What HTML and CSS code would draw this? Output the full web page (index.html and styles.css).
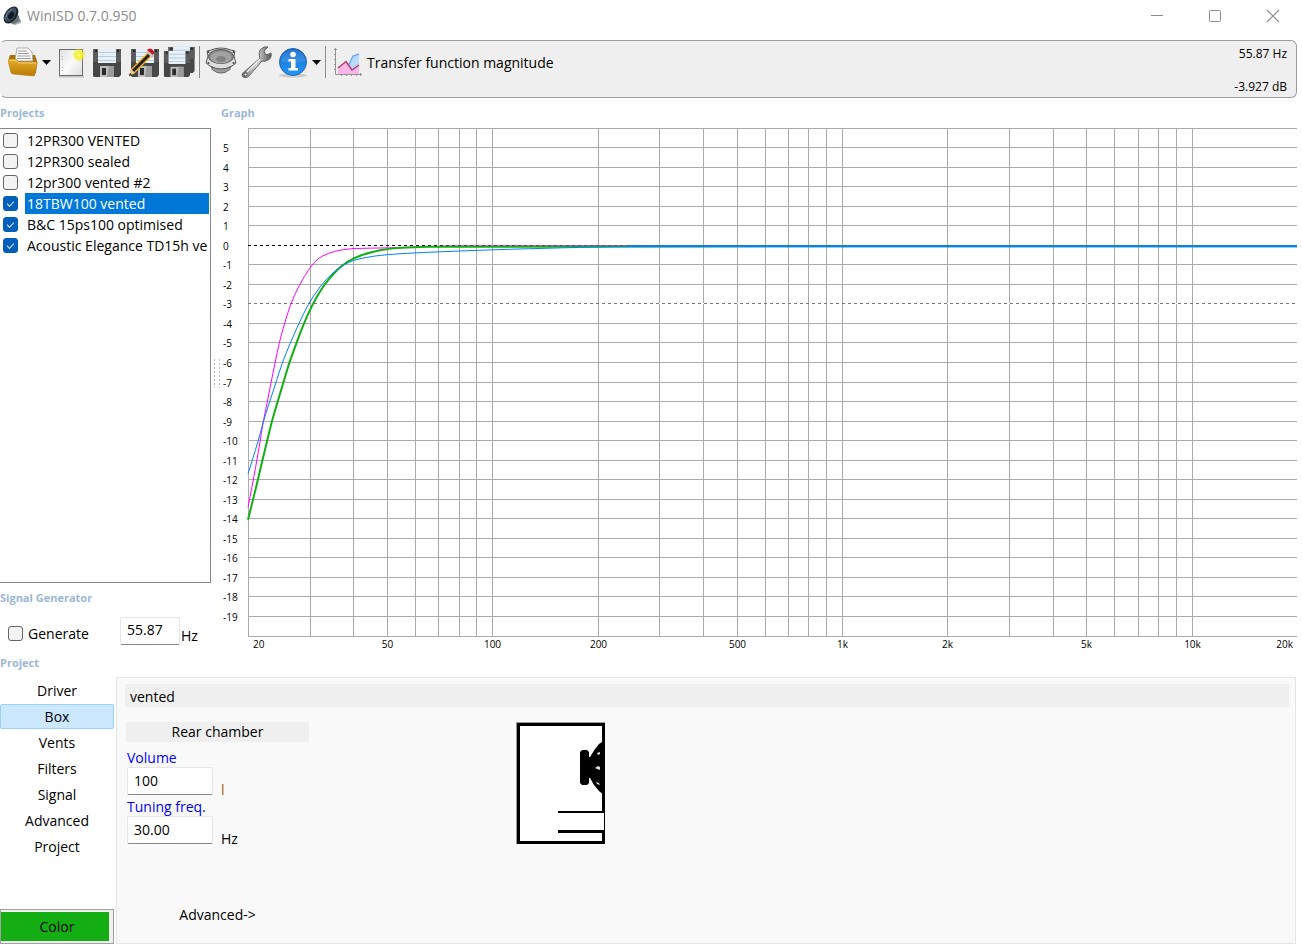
FILE: index.html
```html
<!DOCTYPE html>
<html lang="en">
<head>
    <meta charset="UTF-8">
    <meta name="viewport" content="width=device-width, initial-scale=1.0">
    <title>WinISD 0.7.0.950</title>
    <link rel="stylesheet" href="styles.css">
</head>
<body>
    <header class="titlebar">
        <svg class="app-icon" width="20" height="20" viewBox="0 0 20 20">
            <path d="M9 18 L13 15 L19 14 L19 17 L13 19 Z" fill="#a9b0b3"/>
            <path d="M13 7 L17 10 L18 15 L12 18 L8 17 Z" fill="#6b7679"/>
            <ellipse cx="9" cy="9" rx="6" ry="9.5" transform="rotate(36 9 9)" fill="#1b242b"/>
            <ellipse cx="8.5" cy="8.5" rx="4.5" ry="8" transform="rotate(36 8.5 8.5)" fill="#3c4f62"/>
            <ellipse cx="9" cy="9.5" rx="2.4" ry="4" transform="rotate(36 9 9.5)" fill="#141a20"/>
            <path d="M3 13 Q4 7 10 3" stroke="#6c8298" fill="none"/>
        </svg>
        <h1>WinISD 0.7.0.950</h1>
        <div class="window-buttons">
            <button aria-label="Minimize"><svg width="14" height="14"><path d="M1 6.5h12" stroke="#8b8b8b"/></svg></button>
            <button aria-label="Maximize"><svg width="14" height="14"><rect x="1.5" y="1.5" width="11" height="11" rx="1" fill="none" stroke="#8b8b8b"/></svg></button>
            <button aria-label="Close"><svg width="14" height="14"><path d="M1 1l12 12M13 1L1 13" stroke="#8b8b8b" stroke-width="1.2"/></svg></button>
        </div>
    </header>

    <svg width="0" height="0" class="defs">
        <defs>
            <linearGradient id="gold" x2="0" y2="1"><stop stop-color="#e7b02a"/><stop offset="1" stop-color="#b97905"/></linearGradient>
            <linearGradient id="paper" x2="1" y2="1"><stop stop-color="#dedede"/><stop offset=".5" stop-color="#fbfbfb"/><stop offset="1" stop-color="#dcdcdc"/></linearGradient>
            <linearGradient id="steel" x2="1" y2="0"><stop stop-color="#666"/><stop offset=".5" stop-color="#d8d8d8"/><stop offset="1" stop-color="#555"/></linearGradient>
            <linearGradient id="blue" x2="0" y2="1"><stop stop-color="#0b62c8"/><stop offset=".45" stop-color="#1a7fe0"/><stop offset="1" stop-color="#2499f5"/></linearGradient>
            <radialGradient id="glow"><stop stop-color="#ffffa0"/><stop offset=".45" stop-color="#f4ef20"/><stop offset="1" stop-color="#f4ef20" stop-opacity="0"/></radialGradient>
            <symbol id="floppy" viewBox="0 0 28 30">
                <path d="M0 1h28v26l-2 2H1l-1-1z" fill="#474747"/>
                <path d="M0 1h28v13H0z" fill="#5b5b5b"/>
                <path d="M5 1h18v14H5z" fill="#e9f1f8"/>
                <path d="M5 4.5h18M5 8.5h18M5 12.5h18" stroke="#b4cbe0"/>
                <path d="M7 18h14v11H7z" fill="#bdbdbd"/>
                <path d="M16 18h5v11h-7z" fill="#9a9a9a"/>
                <rect x="9" y="20" width="4" height="7" fill="#292929"/>
                <rect x="2" y="2" width="2" height="2" fill="#222"/><rect x="24" y="2" width="2" height="2" fill="#222"/>
            </symbol>
        </defs>
    </svg>

    <div class="toolbar">
        <button class="tool" aria-label="Open project">
            <svg width="30" height="32" viewBox="0 0 30 32">
                <path d="M1 12 L2 9 L27 9 L29 15 L28 27 L3 27z" fill="#a96e08"/>
                <path d="M7 14 L9 2 L20 2 L24 6 L25 15 L7 15z" fill="#fff" stroke="#aaa"/>
                <path d="M10 5h9M10 7.5h11M9.5 10h13M9 12.5h14" stroke="#999"/>
                <path d="M0 15 Q0 13 2 13 L8 13 L11 16 L28 16 Q30 16 29 18 L27 28 Q27 30 25 30 L5 28 Q3 28 3 26z" fill="url(#gold)" stroke="#b88316" stroke-width=".6"/>
                <path d="M1.5 14.5 L8 14.5 L11 17 L28 17" stroke="#f3d371" fill="none"/>
            </svg>
        </button>
        <button class="arrow" aria-label="Recent projects"><svg width="9" height="5"><path d="M0 0h9L4.5 5z"/></svg></button>
        <button class="tool" aria-label="New project">
            <svg width="28" height="32" viewBox="0 0 28 32">
                <path d="M1 30.5h25" stroke="#999" stroke-width="2" opacity=".5"/>
                <rect x="1.5" y="3.5" width="23" height="26" fill="url(#paper)" stroke="#6d6d6d"/>
                <path d="M4.5 10v4M4.5 21v4" stroke="#aaa" stroke-dasharray="1 2"/>
                <circle cx="21" cy="9" r="7" fill="url(#glow)"/>
            </svg>
        </button>
        <button class="tool" aria-label="Save project">
            <svg width="30" height="32"><use href="#floppy" x="0" y="2" width="28" height="30"/></svg>
        </button>
        <button class="tool" aria-label="Save project as">
            <svg width="32" height="32">
                <use href="#floppy" x="3" y="2" width="28" height="30"/>
                <path d="M1 30 L3 23 L21 5 L25 9 L7 27z" fill="#f0b01b"/>
                <path d="M5 25 L23 7" stroke="#242018" stroke-width="3"/>
                <path d="M1 30 L3 23 L7 27z" fill="#e6c593"/><path d="M1 30 L2 27 L4 29z" fill="#222"/>
                <path d="M18 6 L20 4 L26 10 L24 12z" fill="#c3c3c3"/>
                <path d="M19 4 Q22 1 25 4 Q27 7 25 9z" fill="#c91423"/>
            </svg>
        </button>
        <button class="tool" aria-label="Save all projects">
            <svg width="34" height="34">
                <use href="#floppy" x="5" y="1" width="27" height="28"/>
                <use href="#floppy" x="0" y="5" width="28" height="28"/>
            </svg>
        </button>
        <span class="separator"></span>
        <button class="tool" aria-label="Driver editor">
            <svg width="32" height="30" viewBox="0 0 32 30">
                <path d="M4 15 L7 23 Q16 30 25 23 L28 15z" fill="#666"/>
                <path d="M8 23 Q16 28 24 23 L25 21 L7 21z" fill="#999"/>
                <path d="M2 4 L6 3 Q16 -1 26 3 L30 4 L29 9 L31 16 L27 19 Q16 25 5 19 L1 16 L3 9z" fill="#dcdcdc" stroke="#5a5a5a"/>
                <ellipse cx="16" cy="9.5" rx="12.5" ry="7" fill="#8b8b8b" stroke="#555"/>
                <ellipse cx="16" cy="10.5" rx="10.5" ry="6" fill="#a2a2a2"/>
                <ellipse cx="16" cy="12" rx="5" ry="3" fill="#828282"/>
                <circle cx="3.5" cy="5" r="1" fill="#444"/><circle cx="28.5" cy="5" r="1" fill="#444"/>
                <circle cx="3.5" cy="16" r="1" fill="#444"/><circle cx="28.5" cy="16" r="1" fill="#444"/>
            </svg>
        </button>
        <button class="tool" aria-label="Options">
            <svg width="32" height="34" viewBox="0 0 32 34">
                <path d="M2 28 L19 13 Q17 7 20 4 Q23 1 27 2 L23 6 L25 10 L30 8 Q31 13 27 15 Q24 17 21 16 L8 31 Q5 34 2 32 Q0 30 2 28z" fill="url(#steel)" stroke="#646464"/>
                <path d="M6 27 L19 14" stroke="#eee" stroke-width="1.5"/>
                <circle cx="4.5" cy="29.5" r="1.500" fill="#f4f4f4" stroke="#555"/>
            </svg>
        </button>
        <button class="tool" aria-label="About">
            <svg width="30" height="32" viewBox="0 0 30 32">
                <ellipse cx="15" cy="29.5" rx="14" ry="2" fill="#aaa" opacity=".5"/>
                <circle cx="15" cy="16" r="13.5" fill="url(#blue)" stroke="#2465b0"/>
                <path d="M2.5 15 Q5 4 15 3.5 Q25 4 27.5 15 Q15 19 2.5 15z" fill="#fff" opacity=".12"/>
                <circle cx="15" cy="8.5" r="2.8" fill="#fff"/>
                <path d="M10.5 13h7v9h2.5v2.5h-9.5V22h2.5v-6.500h-2.5z" fill="#fff"/>
            </svg>
        </button>
        <button class="arrow about-arrow" aria-label="Help menu"><svg width="9" height="5"><path d="M0 0h9L4.5 5z"/></svg></button>
        <span class="separator"></span>
        <button class="tool chart-type">
            <svg width="30" height="30" viewBox="0 0 30 30">
                <path d="M15 20 L20 9 L26 7 V24 H13z" fill="#b9d9fb"/>
                <path d="M15 19 L20 9 L26 7" stroke="#74aaf0" stroke-width="1.5" fill="none"/>
                <path d="M5 22 L13 15 L19 24 L26 19 V27 H5z" fill="#f8b7e6"/>
                <path d="M5 21 L13 14.5 L19 23 L26 18" stroke="#b9386e" stroke-width="1.5" fill="none"/>
                <path d="M2.5 1v26.5H29" stroke="#949494" fill="none"/>
                <path d="M1 2.5h3M1 7.5h2M1 12.5h2M1 17.5h2M1 22.5h2M8.5 27v2M13.5 27v2M18.5 27v2M23.5 27v2M27.5 26v3" stroke="#949494"/>
            </svg>
            <span>Transfer function magnitude</span>
        </button>
        <div class="readout">
            <output>55.87 Hz</output>
            <output>-3.927 dB</output>
        </div>
    </div>

    <main class="workspace">
        <aside class="sidebar">
            <h2>Projects</h2>
            <ul class="project-list">
                <li><label><input type="checkbox"><span>12PR300 VENTED</span></label></li>
                <li><label><input type="checkbox"><span>12PR300 sealed</span></label></li>
                <li><label><input type="checkbox"><span>12pr300 vented #2</span></label></li>
                <li class="selected"><label><input type="checkbox" checked><span>18TBW100 vented</span></label></li>
                <li><label><input type="checkbox" checked><span>B&amp;C 15ps100 optimised</span></label></li>
                <li><label><input type="checkbox" checked><span>Acoustic Elegance TD15h ve</span></label></li>
            </ul>
            <h2>Signal Generator</h2>
            <div class="generator">
                <label><input type="checkbox"><span>Generate</span></label>
                <input type="text" value="55.87" aria-label="Generator frequency">
                <span class="unit">Hz</span>
            </div>
        </aside>
        <div class="splitter"></div>
        <section class="graph">
            <h2>Graph</h2>
            <div class="plot"><svg id="chart" width="100%" height="100%"></svg></div>
        </section>
    </main>

    <section class="project">
        <div class="project-menu">
            <h2>Project</h2>
            <nav>
                <button>Driver</button>
                <button class="active">Box</button>
                <button>Vents</button>
                <button>Filters</button>
                <button>Signal</button>
                <button>Advanced</button>
                <button>Project</button>
            </nav>
            <button class="color">Color</button>
        </div>
        <div class="panel">
            <div class="panel-title">vented</div>
            <div class="panel-body">
                <form class="chamber">
                    <h3>Rear chamber</h3>
                    <label for="volume">Volume</label>
                    <div class="field"><input type="text" id="volume" value="100"><span class="unit litre">l</span></div>
                    <label for="tuning">Tuning freq.</label>
                    <div class="field"><input type="text" id="tuning" value="30.00"><span class="unit">Hz</span></div>
                    <button type="button" class="more">Advanced-&gt;</button>
                </form>
                <svg width="89" height="122" viewBox="0 0 89 122">
                    <path d="M.5 122V.5H89" stroke="#999" fill="none"/>
                    <rect x="2.5" y="2.5" width="85" height="118" fill="#fff" stroke="#000" stroke-width="3"/>
                    <path d="M64 30l2-2h5l2 2v5h1l5-8 4-5 6-4v56l-6-5-5-6-4-7h-1v5l-2 2h-5l-2-2z" fill="#000"/>
                    <path d="M81 31l3-1v2l-2 1zM79 46l3-2 2 1v3l-3-1zM80 60l3 1 1 2-3-1z" fill="#ddd"/>
                    <rect x="42" y="89" width="46" height="29" fill="#fff"/>
                    <path d="M42 90h46" stroke="#000" stroke-width="2"/>
                    <path d="M42 109.5h46" stroke="#000" stroke-width="3"/>
                    <path d="M88.5 89v21" stroke="#000"/>
                    <path d="M87.5 108v14" stroke="#000" stroke-width="3"/>
                </svg>
            </div>
        </div>
    </section>

    <script src="script.js"></script>
</body>
</html>
```
FILE: styles.css
```css
* {
    box-sizing: border-box;
}
body {
    margin: 0;
    height: 100vh;
    min-height: 800px;
    display: flex;
    flex-direction: column;
    background: #fff;
    color: #000;
    font-family: "Open Sans", "Noto Sans", sans-serif;
    font-size: 14px;
    line-height: 20px;
    overflow: hidden;
}
button, input {
    font: inherit;
    color: inherit;
}
button {
    padding: 0;
    border: none;
    background: none;
}
svg {
    display: block;
}
h1, h2, h3, ul {
    margin: 0;
    padding: 0;
}
h2 {
    color: #9ab8d6;
    font-size: 11px;
    line-height: 16px;
}
.defs {
    position: absolute;
}

/* title bar */
.titlebar {
    display: flex;
    align-items: center;
    height: 32px;
    padding-left: 2px;
    flex-shrink: 0;
}
.titlebar h1 {
    flex: 1;
    margin-left: 5px;
    color: #8b8b8b;
    font-size: 14px;
    font-weight: normal;
}
.window-buttons {
    display: flex;
}
.window-buttons button {
    width: 58px;
    height: 32px;
}
.window-buttons svg {
    margin: auto;
}

/* toolbar */
.toolbar {
    display: flex;
    align-items: flex-start;
    height: 58px;
    margin: 8px 5px 0 0;
    padding: 4px 9px 0 7px;
    flex-shrink: 0;
    border: 1px solid #9d9d9d;
    border-left-color: #efefef;
    border-radius: 6px;
    background: #efefef;
}
.tool {
    display: flex;
    align-items: center;
    justify-content: center;
    width: 36px;
    height: 34px;
}
.tool:first-child {
    width: 30px;
}
.arrow {
    width: 16px;
    height: 34px;
}
.about-arrow {
    width: 11px;
}
.arrow svg {
    margin: auto;
}
.separator {
    width: 1px;
    height: 32px;
    margin: 1px 3px 1px 1px;
    background: #8b8b8b;
}
.about-arrow + .separator {
    margin-left: 3px;
}
.chart-type {
    width: auto;
    margin-left: 4px;
    gap: 4px;
}
.chart-type span {
    padding-top: 2px;
}
.readout {
    display: flex;
    flex-direction: column;
    gap: 13px;
    margin: -1px 0 0 auto;
    font-size: 12px;
    text-align: right;
}

/* inputs */
input[type="checkbox"] {
    appearance: none;
    display: grid;
    place-items: center;
    width: 15px;
    height: 15px;
    margin: 0;
    flex-shrink: 0;
    border: 1px solid #666;
    border-radius: 3px;
    background: #f3f3f3;
}
input[type="checkbox"]:checked {
    border-color: #005fb8;
    background: #005fb8;
}
input[type="checkbox"]:checked::after {
    content: "";
    width: 6px;
    height: 3px;
    margin-bottom: 2px;
    border: solid #d5e5f3;
    border-width: 0 0 1px 1px;
    transform: rotate(-45deg);
}
input[type="text"] {
    height: 28px;
    padding: 0 6px 2px;
    border: 1px solid #e5e5e5;
    border-bottom-color: #868686;
    border-radius: 2px;
    background: #fff;
}

/* upper part */
.workspace {
    display: flex;
    flex: 1;
    min-height: 0;
    padding: 7px 5px 0 0;
}
.sidebar {
    display: flex;
    flex-direction: column;
    width: 211px;
}
.project-list {
    flex: 1;
    margin: 7px 0;
    padding: 1px 1px 0 0;
    border: 1px solid #828790;
    border-left: none;
    list-style: none;
    overflow: hidden;
}
.project-list label {
    display: flex;
    align-items: center;
    gap: 7px;
    height: 21px;
    padding-left: 3px;
}
.project-list span {
    flex: 1;
    padding-left: 2px;
    line-height: 21px;
    white-space: nowrap;
    overflow: hidden;
}
.selected span {
    background: #0078d7;
    color: #fff;
}
.generator {
    display: flex;
    align-items: center;
    height: 49px;
    padding-left: 8px;
}
.generator label {
    display: flex;
    align-items: center;
    gap: 5px;
    width: 112px;
    margin-top: 6px;
}
.generator input[type="text"] {
    width: 60px;
}
.generator .unit {
    margin: 10px 0 0 1px;
}
.splitter {
    align-self: center;
    width: 8px;
    height: 30px;
    margin: 0 0 14px 2px;
    background: radial-gradient(circle, #bbb 1px, transparent 1px) -1px 0 / 5px 4px;
}
.graph {
    display: flex;
    flex: 1;
    flex-direction: column;
    min-width: 0;
}
.plot {
    flex: 1;
    min-height: 0;
    margin-top: 7px;
}
.plot text {
    font-size: 10px;
}

/* lower part */
.project {
    display: flex;
    padding: 0 6px 1px 0;
    flex-shrink: 0;
}
.project-menu {
    display: flex;
    flex-direction: column;
    width: 114px;
    margin-right: 2px;
}
.project-menu nav {
    display: flex;
    flex: 1;
    flex-direction: column;
    gap: 1px;
    margin-top: 7px;
}
.project-menu nav button {
    height: 25px;
    border: 1px solid transparent;
    border-radius: 2px;
}
.project-menu nav .active {
    border-color: #99d1ff;
    background: #cce8ff;
}
.color {
    height: 35px;
    border: 1px solid #a0a0a0;
    background: #14ae14;
    box-shadow: inset -2px 0 0 2px #f0f0f0;
}
.panel {
    flex: 1;
    height: 267px;
    margin-top: 22px;
    padding: 6px;
    border: 1px solid #e5e5e5;
    background: #f9f9f9;
}
.panel-title {
    margin-left: 2px;
    padding: 3px 5px 0;
    background: #efefef;
}
.panel-body {
    display: flex;
    align-items: flex-start;
    gap: 207px;
    padding: 15px 3px 0;
}
.chamber {
    display: flex;
    flex-direction: column;
    width: 183px;
}
.chamber h3 {
    margin-bottom: 6px;
    background: #efefef;
    font-size: 14px;
    font-weight: normal;
    text-align: center;
}
.chamber label {
    margin-left: 1px;
    color: #00f;
}
.field {
    display: flex;
    align-items: flex-end;
    gap: 8px;
    margin: -1px 0 2px 1px;
}
.field input {
    width: 86px;
}
.field .unit {
    margin-bottom: -5px;
}
.field .litre {
    color: #a05a00;
}
.more {
    align-self: center;
    margin-top: 59px;
}
```
FILE: script.js
```js
const chart = document.getElementById("chart");
const LEFT = 27;
const BOTTOM = 18;
const DB_MAX = 6;
const DB_MIN = -20;

// points are x,y on a 1049 x 508 plot
const curves = [
    { color: "#ff00ff", width: 1, points: "0,379 9,332 15,294 19,275 23,254 27,235 31,215 36,197 42,177 51,157 62,139 70,130 80,125 95,121 112,120 152,119.5 192,118 210,117.5 1049,117.5" },
    { color: "#14ae14", width: 2, points: "0,391 9,355 14,333 19,313 24,292 30,272 36,252 41,235 48,216 55,197 64,177 75,158 85,146 94,137 105,130 122,124 142,120 165,119 192,118 1049,118" },
    { color: "#0080ff", width: 1, points: "0,345 9,317 15,294 21,275 28,254 34,235 42,215 51,195 60,176 72,158 84,145 95,137 105,132 119,129 132,127 159,125 192,123.5 232,122 262,121 299,120 335,119 379,118.5" },
    { color: "#0080ff", width: 2, points: "379,118 500,118 1049,118" }
];

function line(x1, y1, x2, y2, color, extra) {
    return `<line x1="${x1}" y1="${y1}" x2="${x2}" y2="${y2}" stroke="${color}" ${extra || ""}/>`;
}

// smooth path through the midpoints
function curvePath(pts) {
    let d = `M${pts[0][0]} ${pts[0][1]}`;
    for (let i = 1; i < pts.length - 1; i++) {
        const mx = (pts[i][0] + pts[i + 1][0]) / 2;
        const my = (pts[i][1] + pts[i + 1][1]) / 2;
        d += ` Q${pts[i][0]} ${pts[i][1]} ${mx} ${my}`;
    }
    const last = pts[pts.length - 1];
    return d + ` L${last[0]} ${last[1]}`;
}

function drawChart() {
    const w = chart.clientWidth - LEFT;
    const h = chart.clientHeight - BOTTOM;
    const xOf = f => Math.round(LEFT + Math.log10(f / 20) / 3 * w) + 0.5;
    const yOf = db => Math.floor((DB_MAX - db) / (DB_MAX - DB_MIN) * (h - 1)) + 0.5;
    const right = LEFT + w;
    let out = "";

    for (let decade = 10; decade <= 10000; decade *= 10) {
        for (let i = 1; i < 10; i++) {
            const f = decade * i;
            if (f >= 20 && f < 20000) {
                out += line(xOf(f), 0, xOf(f), h, "#aaa");
            }
        }
    }
    for (let db = DB_MAX; db >= DB_MIN; db--) {
        const y = yOf(db);
        if (db === 0 || db === -3) {
            out += line(LEFT, y, right, y, "#fff");
            out += line(LEFT, y, right, y, db ? "#777" : "#000", 'stroke-dasharray="3 3"');
        } else {
            out += line(LEFT, y, right, y, "#aaa");
        }
        if (db < DB_MAX && db > DB_MIN) {
            out += `<text x="2" y="${y + 4}">${db}</text>`;
        }
    }

    const labels = { 20: "20", 50: "50", 100: "100", 200: "200", 500: "500", 1000: "1k", 2000: "2k", 5000: "5k", 10000: "10k", 20000: "20k" };
    for (const f in labels) {
        let x = xOf(f);
        let anchor = "middle";
        if (f === "20") { x = LEFT + 5; anchor = "start"; }
        if (f === "20000") { x = right - 4; anchor = "end"; }
        out += `<text x="${x}" y="${h + 11}" text-anchor="${anchor}">${labels[f]}</text>`;
    }

    for (const c of curves) {
        const pts = c.points.split(" ").map(p => {
            const [x, y] = p.split(",").map(Number);
            return [LEFT + x / 1049 * w, y / 508 * h];
        });
        out += `<path d="${curvePath(pts)}" fill="none" stroke="${c.color}" stroke-width="${c.width}"/>`;
    }
    chart.innerHTML = out;
}

drawChart();
window.addEventListener("resize", drawChart);
```
